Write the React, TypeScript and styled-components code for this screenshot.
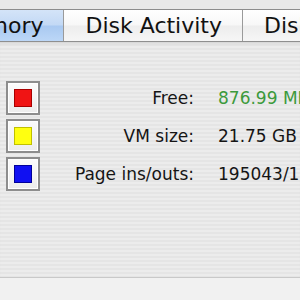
import styled, { createGlobalStyle } from 'styled-components';

const Global = createGlobalStyle`
  html, body {
    margin: 0;
    padding: 0;
    width: 300px;
    height: 300px;
    overflow: hidden;
    background: #e9e9e9;
  }
  body {
    font-family: 'DejaVu Sans', 'Liberation Sans', sans-serif;
  }
`;

const Window = styled.div`
  width: 300px;
  height: 300px;
  display: flex;
  flex-direction: column;
  overflow: hidden;
`;

const TopStrip = styled.div`
  height: 9px;
  background: #e8e8e8;
`;

const TabBar = styled.div`
  display: flex;
  margin-left: -67px;
  height: 33px;
  border-top: 1px solid #8c8c8c;
  border-bottom: 1px solid #8f8f8f;
  box-sizing: border-box;
`;

const Tab = styled.div<{ $active?: boolean }>`
  flex: none;
  padding: 0 20px 0 21px;
  display: flex;
  align-items: center;
  font-size: 22px;
  color: #111;
  border-right: 1px solid #9a9a9a;
  background: ${(p) =>
    p.$active
      ? 'linear-gradient(#d4e4f8 0%, #c3d9f5 48%, #a9c9f1 52%, #bcd7f7 100%)'
      : 'linear-gradient(#ffffff 0%, #f7f7f7 48%, #ededed 52%, #f6f6f6 100%)'};
`;

const Panel = styled.div`
  flex: 1;
  display: flex;
  flex-direction: column;
  gap: 4px;
  padding: 39px 0 0 6px;
  background: repeating-linear-gradient(#ececec 0px, #ececec 2px, #e5e5e5 2px, #e5e5e5 4px);
  box-shadow: inset 0 3px 3px -2px rgba(0, 0, 0, 0.12);
`;

const Row = styled.div`
  display: flex;
  align-items: center;
  height: 34px;
`;

const Well = styled.div`
  width: 34px;
  height: 34px;
  box-sizing: border-box;
  border: 2px solid #8d8d8d;
  background: linear-gradient(#fbfbfb, #ececec);
  box-shadow: inset 0 0 0 1px #ffffff;
  display: flex;
  align-items: center;
  justify-content: center;
  flex: none;
`;

const Swatch = styled.div<{ $fill: string; $edge: string }>`
  width: 18px;
  height: 18px;
  box-sizing: border-box;
  background: ${(p) => p.$fill};
  border: 1px solid ${(p) => p.$edge};
`;

const Label = styled.div`
  width: 154px;
  flex: none;
  text-align: right;
  font-size: 17px;
  color: #151515;
  white-space: nowrap;
`;

const Value = styled.div<{ $color?: string }>`
  margin-left: 24px;
  font-size: 17px;
  white-space: nowrap;
  color: ${(p) => p.$color || '#151515'};
`;

const Footer = styled.div`
  height: 22px;
  border-top: 1px solid #c9c9c9;
  background: #f1f1f1;
`;

const rows = [
  { label: 'Free:', value: '876.99 MB', fill: '#f01414', edge: '#a80000', color: '#3c9a3c' },
  { label: 'VM size:', value: '21.75 GB', fill: '#ffff10', edge: '#c0c000' },
  { label: 'Page ins/outs:', value: '195043/1', fill: '#1010f2', edge: '#00009a' },
];

const App: React.FC = () => {
  return (
    <Window>
      <Global />
      <TopStrip />
      <TabBar>
        <Tab $active>Memory</Tab>
        <Tab>Disk Activity</Tab>
        <Tab>Disk Usage</Tab>
      </TabBar>
      <Panel>
        {rows.map((r) => (
          <Row key={r.label}>
            <Well>
              <Swatch $fill={r.fill} $edge={r.edge} />
            </Well>
            <Label>{r.label}</Label>
            <Value $color={r.color}>{r.value}</Value>
          </Row>
        ))}
      </Panel>
      <Footer />
    </Window>
  );
};

export default App;
